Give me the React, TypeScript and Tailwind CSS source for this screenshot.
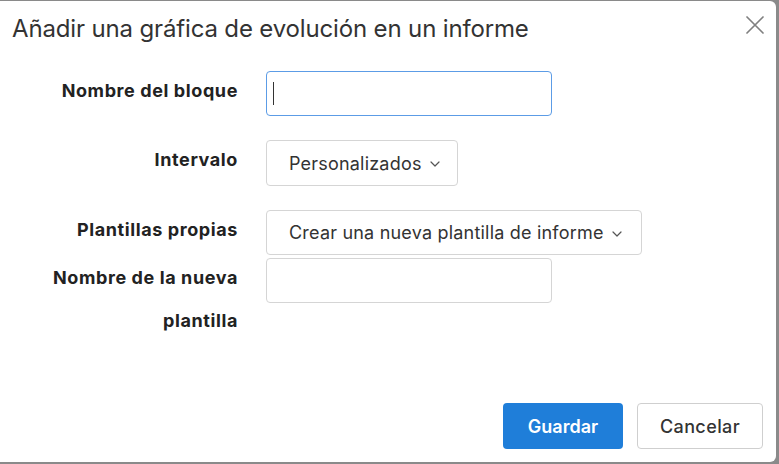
import React from "react";

function Chevron() {
  return (
    <svg width="10" height="6" viewBox="0 0 10 6" fill="none" className="ml-[8px] mt-[2px] shrink-0">
      <path d="M1 1l4 4 4-4" stroke="#555" strokeWidth="1.2" strokeLinecap="round" strokeLinejoin="round" />
    </svg>
  );
}

function CloseIcon() {
  return (
    <svg width="20" height="20" viewBox="0 0 20 20" fill="none">
      <path d="M2 2l16 16M18 2L2 18" stroke="#808080" strokeWidth="1.7" strokeLinecap="round" />
    </svg>
  );
}

export default function App() {
  const font = { fontFamily: "Inter, 'Liberation Sans', Arial, sans-serif" };
  return (
    <div className="h-[464px] w-[779px] overflow-hidden bg-[#8a8a8a] pt-px" style={font}>
      <div className="flex h-[461px] w-[776px] flex-col rounded-r-[6px] bg-white">
        <div className="flex items-start justify-between pl-[12px] pr-[11px] pt-[14px]">
          <h1 className="text-[24px] leading-[28px] font-normal tracking-[-0.15px] text-[#333]">Añadir una gráfica de evolución en un informe</h1>
          <button className="mt-[0px]">
            <CloseIcon />
          </button>
        </div>

        <div className="mt-[28px] grid grid-cols-[238px_auto] gap-x-[28px] text-[#222]">
          <label className="mt-[-2px] text-right text-[18px] leading-[43px] font-bold tracking-[0.6px]">Nombre del bloque</label>
          <div className="flex h-[45px] w-[286px] items-center rounded-[4px] border-[1.5px] border-[#5c9ce6]">
            <span className="ml-[6px] h-[23px] w-px bg-[#333]" />
          </div>

          <label className="mt-[22px] text-right text-[18px] leading-[43px] font-bold tracking-[0.6px]">Intervalo</label>
          <div className="mt-[24px]">
            <button className="flex h-[46px] w-[192px] items-center rounded-[4px] border border-[#d5d5d5] pl-[22px] text-[18px] tracking-[0.2px] text-[#333]">
              Personalizados
              <Chevron />
            </button>
          </div>

          <label className="mt-[22px] text-right text-[18px] leading-[43px] font-bold tracking-[0.6px]">Plantillas propias</label>
          <div className="mt-[24px]">
            <button className="flex h-[45px] w-[376px] items-center rounded-[4px] border border-[#d5d5d5] pl-[22px] text-[18px] tracking-[0.2px] text-[#333]">
              Crear una nueva plantilla de informe
              <Chevron />
            </button>
          </div>

          <label className="mt-[1px] text-right text-[18px] leading-[43px] font-bold tracking-[0.6px]">
            Nombre de la nueva
            <br />
            plantilla
          </label>
          <div className="mt-[3px]">
            <div className="h-[45px] w-[286px] rounded-[4px] border border-[#d5d5d5]" />
          </div>
        </div>

        <div className="mt-auto mb-[13px] flex justify-end gap-[14px] pr-[13px]">
          <button className="h-[46px] w-[120px] rounded-[4px] bg-[#1f7ed9] text-[18px] font-semibold text-white">Guardar</button>
          <button className="h-[46px] w-[126px] rounded-[4px] border border-[#cfcfcf] bg-white text-[18px] font-medium tracking-[0.4px] text-[#333]">Cancelar</button>
        </div>
      </div>
    </div>
  );
}
